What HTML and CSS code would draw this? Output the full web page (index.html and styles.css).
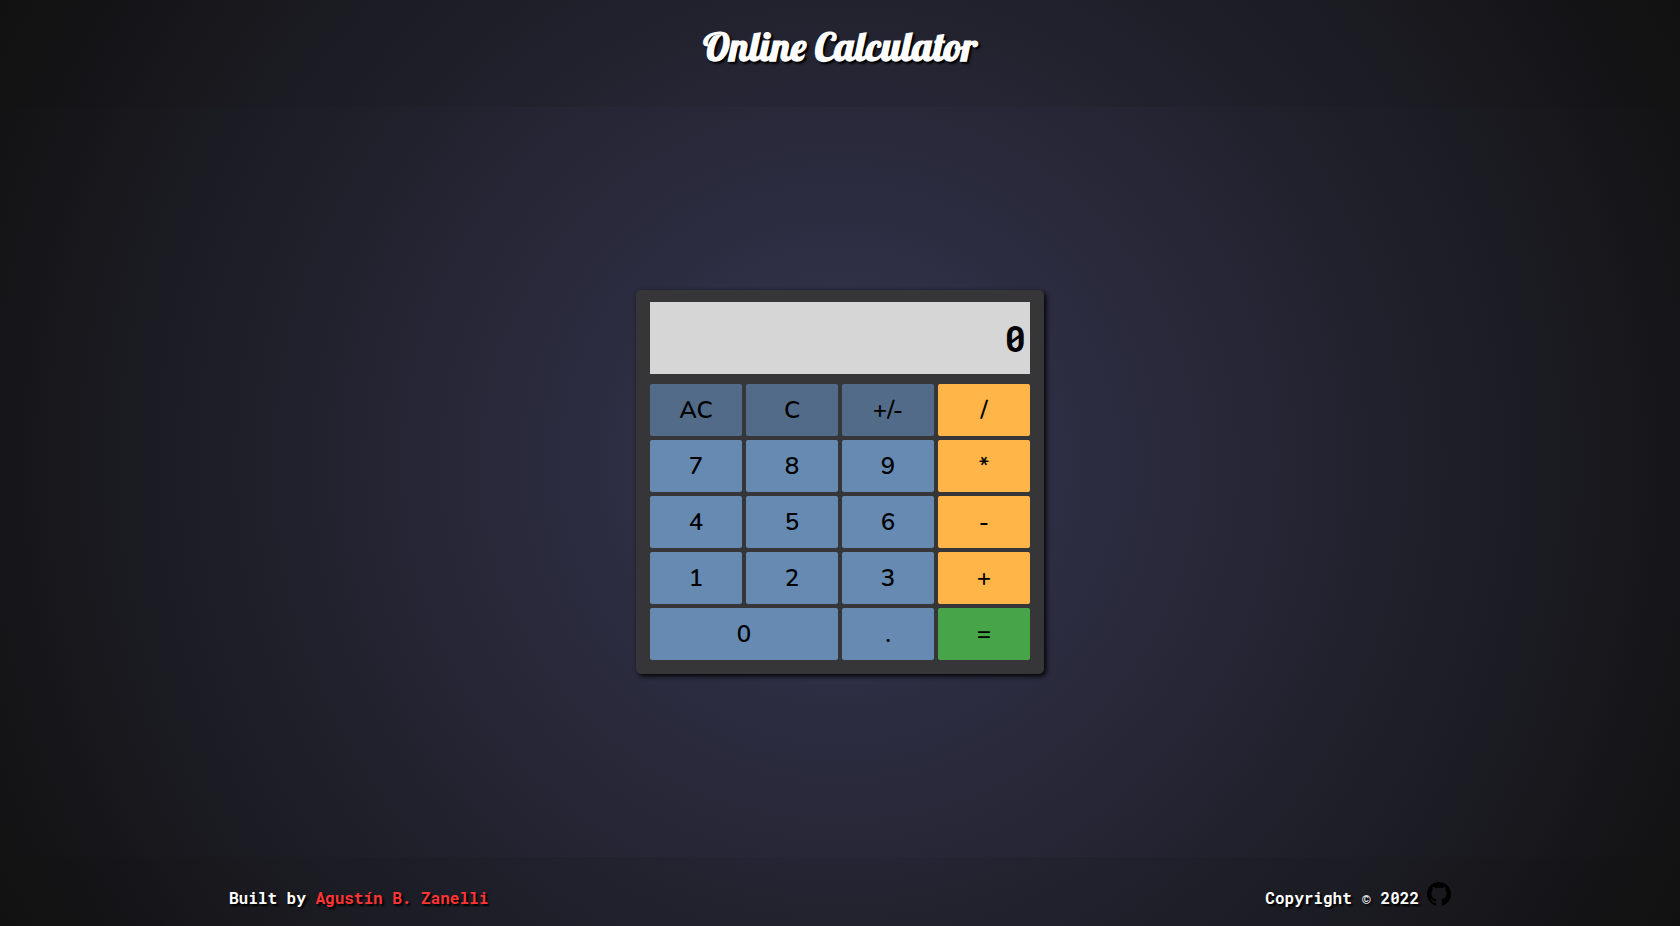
FILE: index.html
```html
<!DOCTYPE html>
<html lang="en">
<head>
<meta charset="utf-8">
<meta name="viewport" content="width=device-width, initial-scale=1">
<title>Online Calculator</title>
<link rel="stylesheet" href="styles.css">
</head>
<body class="page">
<header class="header"><h1 class="title">Online Calculator</h1></header>
<main class="main">
<section class="calculator" aria-label="Calculator">
<output class="display" aria-label="Result">0</output>
<div class="keys">
<button class="key key-clear" type="button">AC</button>
<button class="key key-clear" type="button">C</button>
<button class="key key-clear" type="button">+/-</button>
<button class="key key-operator" type="button">/</button>
<button class="key" type="button">7</button>
<button class="key" type="button">8</button>
<button class="key" type="button">9</button>
<button class="key key-operator" type="button">*</button>
<button class="key" type="button">4</button>
<button class="key" type="button">5</button>
<button class="key" type="button">6</button>
<button class="key key-operator" type="button">-</button>
<button class="key" type="button">1</button>
<button class="key" type="button">2</button>
<button class="key" type="button">3</button>
<button class="key key-operator" type="button">+</button>
<button class="key key-wide" type="button">0</button>
<button class="key" type="button">.</button>
<button class="key key-equals" type="button">=</button>
</div>
</section>
</main>
<footer class="footer">
<div class="footer-row">
<p class="credit">Built by <a class="author" href="#">Agustín B. Zanelli</a></p>
<div class="copyright">
<p class="credit">Copyright <span class="symbol">©</span> 2022</p>
<a class="github" href="#" aria-label="GitHub"><svg class="github-icon" viewBox="0 0 16 16" aria-hidden="true"><path d="M8 0C3.58 0 0 3.58 0 8c0 3.54 2.29 6.53 5.47 7.59.4.07.55-.17.55-.38 0-.19-.01-.82-.01-1.49-2.01.37-2.53-.49-2.69-.94-.09-.23-.48-.94-.82-1.13-.28-.15-.68-.52-.01-.53.63-.01 1.08.58 1.23.82.72 1.21 1.87.87 2.33.66.07-.52.28-.87.51-1.07-1.78-.2-3.64-.89-3.64-3.95 0-.87.31-1.59.82-2.15-.08-.2-.36-1.02.08-2.12 0 0 .67-.21 2.2.82.64-.18 1.32-.27 2-.27s1.36.09 2 .27c1.53-1.04 2.2-.82 2.2-.82.44 1.1.16 1.92.08 2.12.51.56.82 1.27.82 2.15 0 3.07-1.87 3.75-3.65 3.95.29.25.54.73.54 1.48 0 1.07-.01 1.93-.01 2.2 0 .21.15.46.55.38A8.01 8.01 0 0 0 16 8c0-4.42-3.58-8-8-8z"/></svg></a>
</div>
</div>
</footer>
</body>
</html>
```
FILE: styles.css
```css
* { box-sizing: border-box; }

.page {
  margin: 0;
  min-height: 100vh;
  display: flex;
  flex-direction: column;
  color: #fff;
  background: radial-gradient(circle, #363652, #111);
}

.header {
  height: 107px;
  padding-top: 21px;
  background: rgba(17, 17, 17, 0.1);
}

.title {
  margin: 0;
  font: 700 40px/50px Lobster, "Liberation Serif", serif;
  text-align: center;
  text-shadow: 2px 2px 2px #000;
}

.main {
  flex: 1;
  display: flex;
  align-items: center;
  justify-content: center;
}

.calculator {
  width: 408px;
  padding: 12px 14px 14px;
  border-radius: 5px;
  background: #363638;
  box-shadow: 2px 2px 5px #000;
}

.display {
  display: block;
  height: 72px;
  margin-bottom: 10px;
  padding: 0 4px;
  background: #d6d6d6;
  color: #000;
  font: 700 36px/72px "Roboto Mono", "DejaVu Sans Mono", monospace;
  text-align: right;
}

.keys {
  display: grid;
  grid-template-columns: repeat(4, 1fr);
  grid-auto-rows: 52px;
  gap: 4px;
}

.key {
  padding: 0;
  border: 0;
  border-radius: 2px;
  background: #678ab3;
  color: #000;
  font: 600 24px/32px Nunito, Lato, sans-serif;
  cursor: pointer;
}

.key-clear { background: #526b88; }
.key-operator { background: #ffb547; }
.key-equals { background: #48a448; }
.key-wide { grid-column: span 2; }

.footer {
  height: 69px;
  padding: 0 24px;
  background: rgba(17, 17, 17, 0.1);
}

.footer-row {
  max-width: 1222px;
  height: 64px;
  margin: 0 auto;
  padding-top: 25px;
  display: flex;
  justify-content: space-between;
}

.credit {
  margin: 0;
  font: 700 16px/32px "Roboto Mono", "DejaVu Sans Mono", monospace;
  text-shadow: 2px 2px 2px #000;
}

.author {
  color: #ff3535;
  text-decoration: none;
}

.symbol { font-weight: 400; }

.copyright {
  display: flex;
  gap: 8px;
}

.github { color: #000; }

.github-icon {
  display: block;
  width: 24px;
  height: 24px;
  fill: currentColor;
}
```
